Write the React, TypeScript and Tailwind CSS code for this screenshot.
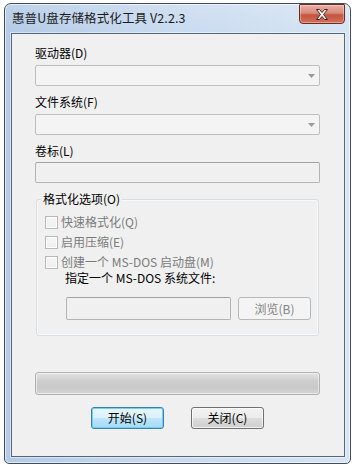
import React from "react";

function Combo() {
  return (
    <div className="mt-[4px] h-[21px] w-[285px] rounded-[2px] border border-[#bfbfbf] bg-[#f4f4f4] flex items-center justify-end pr-[4px]">
      <svg width="7" height="4" viewBox="0 0 7 4">
        <path d="M0 0 L7 0 L3.5 4 Z" fill="#9a9a9a" />
      </svg>
    </div>
  );
}

function Check({ label }: { label: string }) {
  return (
    <div className="h-[16px] flex items-center">
      <div className="w-[13px] h-[13px] border border-[#b8b8b8] bg-[linear-gradient(to_bottom,#f7f7f7,#eeeeee)] shadow-[inset_0_0_0_1px_#ffffff]" />
      <span className="ml-[3px] text-[#7b7b7b]">{label}</span>
    </div>
  );
}

export default function App() {
  return (
    <div className="w-[357px] h-[469px] bg-white pt-[3px] pl-[4px] font-['Noto_Sans_CJK_SC',sans-serif] text-[12px] leading-[16px] text-black">
      <div className="w-[347px] h-[461px] flex flex-col rounded-t-[7px] rounded-b-[5px] border border-[#3f4d5e] bg-[linear-gradient(to_right,#b3cbe6,#c8daef_45%,#d6e4f3)] shadow-[inset_0_0_0_1px_rgba(255,255,255,0.6)]">
        <div className="h-[29px] flex items-start justify-between pl-[7px] pr-[5px] bg-[linear-gradient(to_bottom,rgba(255,255,255,0.15),rgba(255,255,255,0))] rounded-t-[6px]">
          <span className="mt-[6px] text-[12.5px] text-[#1c1c1c] tracking-[0.1px]">惠普U盘存储格式化工具 V2.2.3</span>
          <div className="w-[46px] h-[20px] rounded-b-[4px] rounded-t-[1px] border border-[#6e2a20] bg-[linear-gradient(to_bottom,#e8b0a6_0%,#d88a7a_45%,#c4553f_55%,#d4705a_100%)] shadow-[inset_0_0_0_1px_rgba(255,255,255,0.35)] flex items-center justify-center">
            <svg width="14" height="11" viewBox="-0.5 -0.5 14 11">
              <path d="M1 0 L4 0 L6.5 3 L9 0 L12 0 L8 5 L12 10 L9 10 L6.5 7 L4 10 L1 10 L5 5 Z" fill="#ffffff" stroke="#4a2424" strokeWidth="1" strokeLinejoin="round" />
            </svg>
          </div>
        </div>
        <div className="ml-[6px] w-[334px] h-[424px] border border-[#56667a] bg-[#f0f0f0] pl-[23px] flex flex-col shadow-[0_0_0_1px_rgba(255,255,255,0.45)]">
          <div className="mt-[11px]">驱动器(D)</div>
          <Combo />
          <div className="mt-[8px]">文件系统(F)</div>
          <Combo />
          <div className="mt-[8px]">卷标(L)</div>
          <div className="mt-[3px] h-[21px] w-[285px] rounded-[2px] border border-[#b4b4b4] border-t-[#a2a2a2] bg-[#f0f0f0]" />
          <div className="relative mt-[16px] ml-[1px] w-[283px] h-[137px] rounded-[3px] border border-[#d5dfe5] pt-[14px] pl-[8px] shadow-[inset_0_0_0_1px_rgba(255,255,255,0.6)]">
            <span className="absolute left-[4px] top-[-9px] px-[2px] bg-[#f0f0f0]">格式化选项(O)</span>
            <div className="flex flex-col gap-[4px]">
              <Check label="快速格式化(Q)" />
              <Check label="启用压缩(E)" />
              <Check label="创建一个 MS-DOS 启动盘(M)" />
            </div>
            <div className="pl-[20px]">指定一个 MS-DOS 系统文件:</div>
            <div className="mt-[11px] ml-[21px] flex gap-[7px]">
              <div className="w-[165px] h-[23px] rounded-[2px] border border-[#b4b4b4] border-t-[#a2a2a2] bg-[#f0f0f0]" />
              <div className="w-[73px] h-[23px] rounded-[3px] border border-[#b5b9bc] bg-[#f4f4f4] flex items-center justify-center text-[#838383]">浏览(B)</div>
            </div>
          </div>
          <div className="mt-[36px] w-[285px] h-[23px] rounded-[3px] border border-[#b2b2b2] bg-[linear-gradient(to_bottom,#e4e4e4_0%,#cdcdcd_40%,#c9c9c9_70%,#d6d6d6_100%)] shadow-[inset_0_0_0_1px_rgba(255,255,255,0.5)]" />
          <div className="mt-[12px] ml-[56px] flex gap-[27px]">
            <div className="w-[73px] h-[22px] rounded-[3px] border border-[#3c7fb1] bg-[linear-gradient(to_bottom,#eaf6fd_0%,#d9f0fc_50%,#bee6fd_50%,#a7d9f5_100%)] shadow-[inset_0_0_0_1px_#6fd0f6] flex items-center justify-center">开始(S)</div>
            <div className="w-[73px] h-[22px] rounded-[3px] border border-[#707070] bg-[linear-gradient(to_bottom,#f2f2f2_0%,#ebebeb_50%,#dddddd_50%,#cfcfcf_100%)] shadow-[inset_0_0_0_1px_rgba(255,255,255,0.7)] flex items-center justify-center">关闭(C)</div>
          </div>
        </div>
      </div>
    </div>
  );
}
